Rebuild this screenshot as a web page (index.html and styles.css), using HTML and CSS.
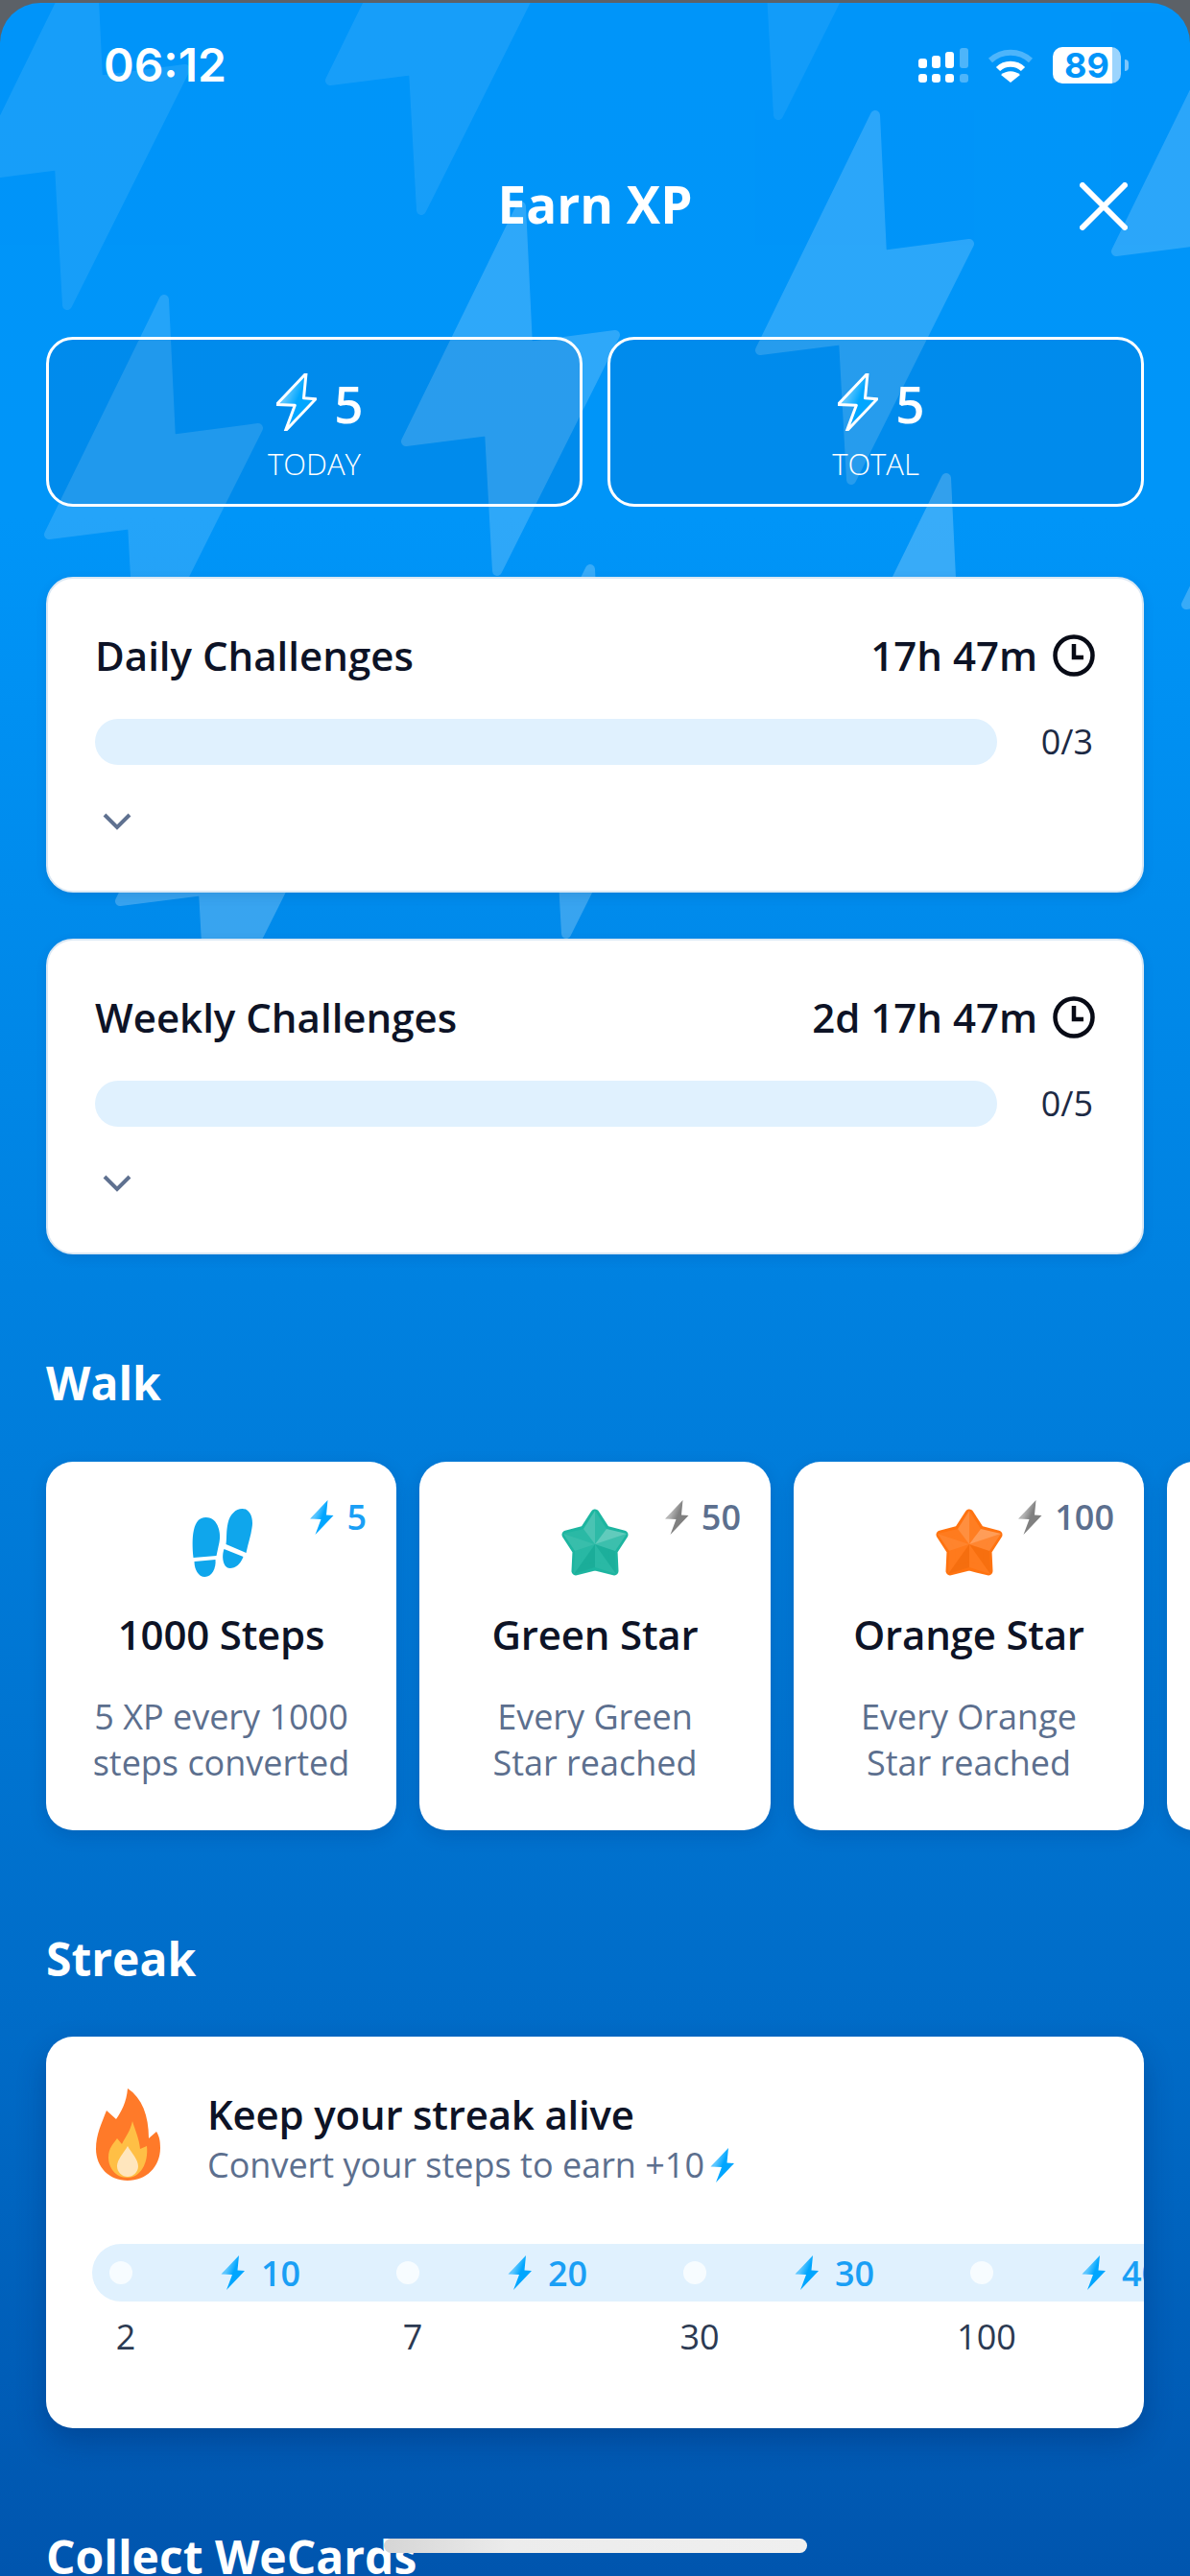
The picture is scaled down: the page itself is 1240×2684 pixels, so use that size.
FILE: index.html
```html
<!DOCTYPE html>
<html lang="en">
<head>
    <meta charset="UTF-8">
    <meta name="viewport" content="width=device-width, initial-scale=1.0">
    <title>Earn XP</title>
    <link rel="stylesheet" href="styles.css">
</head>
<body>
    <svg class="defs" width="0" height="0">
        <defs>
            <linearGradient id="boltFill" x1="0" y1="0" x2="1" y2="0.6">
                <stop offset="0.35" stop-color="#5cc6ff"/>
                <stop offset="0.6" stop-color="#00a6ff"/>
            </linearGradient>
            <linearGradient id="boltGrey" x1="0" y1="0" x2="1" y2="0.6">
                <stop offset="0.35" stop-color="#b5b5b5"/>
                <stop offset="0.6" stop-color="#808080"/>
            </linearGradient>
            <symbol id="bgBolt" viewBox="-110 -395 250 410" overflow="visible">
                <path d="M25 -380 L32 -234 L123 -246 L0 0 L-8 -146 L-95 -135 Z" fill="#fff" stroke="#fff" stroke-width="10" stroke-linejoin="round"/>
            </symbol>
            <symbol id="miniBolt" viewBox="0 0 25 36">
                <path d="M18.5 0 L0 19.5 L11.5 20 L5.5 36 L24.5 16 L17 15.5 Z"/>
            </symbol>
            <symbol id="star" viewBox="0 0 72 72">
                <path d="M36 5 L47 22 L66 27 L55 44 L56 65 L36 60 L16 65 L17 44 L6 27 L25 22 Z" fill="currentColor" stroke="currentColor" stroke-width="9" stroke-linejoin="round"/>
                <path d="M36 37 L36 2 L48 21 Z" fill="#fff" opacity=".08"/>
                <path d="M36 37 L48 21 L69 26 Z" fill="#fff" opacity=".3"/>
                <path d="M36 37 L69 26 L57 44 Z" fill="#fff" opacity=".14"/>
                <path d="M36 37 L57 44 L58 68 Z" fill="#000" opacity=".03"/>
                <path d="M36 37 L58 68 L36 61 Z" fill="#fff" opacity=".06"/>
                <path d="M36 37 L36 61 L14 68 Z" fill="#000" opacity=".04"/>
                <path d="M36 37 L14 68 L15 44 Z" fill="#fff" opacity=".05"/>
                <path d="M36 37 L15 44 L3 26 Z" fill="#fff" opacity=".12"/>
                <path d="M36 37 L3 26 L24 21 Z" fill="#fff" opacity=".06"/>
                <path d="M36 37 L24 21 L36 2 Z" fill="#fff" opacity=".2"/>
            </symbol>
            <symbol id="clock" viewBox="0 0 44 44">
                <circle cx="22" cy="22" r="19.5" fill="none" stroke="#080b16" stroke-width="4.5"/>
                <path d="M22 10 V24 H32" fill="none" stroke="#080b16" stroke-width="4.5"/>
            </symbol>
            <symbol id="chevron" viewBox="0 0 30 18">
                <path d="M2 2 L15 15 L28 2" fill="none" stroke="#5f7190" stroke-width="4"/>
            </symbol>
        </defs>
    </svg>

    <div class="screen">
        <!-- lightning pattern behind everything -->
        <svg class="bg-bolts" width="1240" height="1100" viewBox="0 0 1240 1100">
            <use href="#bgBolt" x="-40" y="-77" width="250" height="410" opacity=".09"/>
            <use href="#bgBolt" x="329" y="-176" width="250" height="410" opacity=".09"/>
            <use href="#bgBolt" x="701" y="-275" width="250" height="410" opacity=".07"/>
            <use href="#bgBolt" x="777" y="105" width="250" height="410" opacity=".17"/>
            <use href="#bgBolt" x="1148" y="2" width="250" height="410" opacity=".17"/>
            <use href="#bgBolt" x="408" y="200" width="250" height="410" opacity=".18"/>
            <use href="#bgBolt" x="36" y="297" width="250" height="410" opacity=".14"/>
            <use href="#bgBolt" x="851" y="483" width="250" height="410" opacity=".22"/>
            <use href="#bgBolt" x="110" y="679" width="250" height="410" opacity=".22"/>
            <use href="#bgBolt" x="480" y="578" width="250" height="410" opacity=".22"/>
            <use href="#bgBolt" x="1221" y="370" width="250" height="410" opacity=".22"/>
        </svg>

        <div class="status-bar">
            <span class="clock-time">06:12</span>
            <div class="status-icons">
                <svg class="signal" width="52" height="37" viewBox="0 0 52 37">
                    <g fill="#fff">
                        <rect x="0" y="11" width="9" height="10" rx="3"/>
                        <rect x="14" y="8" width="9" height="13" rx="3"/>
                        <rect x="28" y="4" width="9" height="17" rx="3"/>
                        <rect x="0" y="27" width="9" height="9" rx="3"/>
                        <rect x="14" y="27" width="9" height="9" rx="3"/>
                        <rect x="28" y="27" width="9" height="9" rx="3"/>
                    </g>
                    <g fill="#fff" opacity=".3">
                        <rect x="43" y="0" width="9" height="21" rx="3"/>
                        <rect x="43" y="27" width="9" height="9" rx="3"/>
                    </g>
                </svg>
                <svg class="wifi" width="48" height="37" viewBox="0 0 48 37">
                    <path d="M3 13 C15 2 33 2 45 13" fill="none" stroke="#fff" stroke-opacity=".3" stroke-width="6"/>
                    <path d="M11 22 C18 15 30 15 37 22" fill="none" stroke="#fff" stroke-width="6"/>
                    <path d="M24 36 L14 28 C20 23 28 23 34 28 Z" fill="#fff"/>
                </svg>
                <div class="battery"><span>89</span></div>
            </div>
        </div>

        <header class="top-bar">
            <h1>Earn XP</h1>
            <svg class="close" width="50" height="50" viewBox="0 0 50 50">
                <path d="M3 3 L47 47 M47 3 L3 47" stroke="#fff" stroke-width="6" stroke-linecap="round"/>
            </svg>
        </header>

        <main class="content">
            <div class="stats">
                <div class="stat">
                    <div class="stat-value">
                        <svg class="stat-bolt" width="46" height="66"><use href="#miniBolt" width="42" height="60" x="2" y="3" fill="url(#boltFill)" stroke="#fff" stroke-width="1.8" stroke-linejoin="round"/></svg>
                        <span>5</span>
                    </div>
                    <div class="stat-label">TODAY</div>
                </div>
                <div class="stat">
                    <div class="stat-value">
                        <svg class="stat-bolt" width="46" height="66"><use href="#miniBolt" width="42" height="60" x="2" y="3" fill="url(#boltFill)" stroke="#fff" stroke-width="1.8" stroke-linejoin="round"/></svg>
                        <span>5</span>
                    </div>
                    <div class="stat-label">TOTAL</div>
                </div>
            </div>

            <section class="challenge">
                <div class="challenge-head">
                    <h3>Daily Challenges</h3>
                    <div class="timer">17h 47m <svg width="44" height="44"><use href="#clock"/></svg></div>
                </div>
                <div class="progress-row">
                    <div class="progress"></div>
                    <span>0/3</span>
                </div>
                <svg class="chevron" width="30" height="18"><use href="#chevron"/></svg>
            </section>

            <section class="challenge">
                <div class="challenge-head">
                    <h3>Weekly Challenges</h3>
                    <div class="timer">2d 17h 47m <svg width="44" height="44"><use href="#clock"/></svg></div>
                </div>
                <div class="progress-row">
                    <div class="progress"></div>
                    <span>0/5</span>
                </div>
                <svg class="chevron" width="30" height="18"><use href="#chevron"/></svg>
            </section>

            <h2 class="section-title">Walk</h2>
            <div class="walk-row">
                <div class="walk-card">
                    <div class="xp-badge xp-blue">
                        <svg width="25" height="36"><use href="#miniBolt" fill="url(#boltFill)"/></svg>5
                    </div>
                    <svg class="walk-icon" width="72" height="72" viewBox="-5.5 0 72 72">
                        <g fill="#0fa6ec">
                            <path d="M1 51 C-1 30 0 9 14 9 C28 9 30 28 28 35 C27 40 26 44 25 49 Z"/>
                            <path d="M2 55 L24 53 C25 62 20 71 13 71 C6 71 2 63 2 55 Z"/>
                            <path d="M35 37 C36 30 35 24 37 15 C39 6 45 0 52 0 C60 0 64 10 62 20 C61 28 58 36 56 46 Z"/>
                            <path d="M33 42 L53 50 C50 58 45 62 39 62 C32 62 30 50 33 42 Z"/>
                        </g>
                    </svg>
                    <h4>1000 Steps</h4>
                    <p>5 XP every 1000 steps converted</p>
                </div>
                <div class="walk-card">
                    <div class="xp-badge xp-grey">
                        <svg width="25" height="36"><use href="#miniBolt" fill="url(#boltGrey)"/></svg>50
                    </div>
                    <svg class="walk-icon star-green" width="72" height="72"><use href="#star"/></svg>
                    <h4>Green Star</h4>
                    <p>Every Green<br>Star reached</p>
                </div>
                <div class="walk-card">
                    <div class="xp-badge xp-grey">
                        <svg width="25" height="36"><use href="#miniBolt" fill="url(#boltGrey)"/></svg>100
                    </div>
                    <svg class="walk-icon star-orange" width="72" height="72"><use href="#star"/></svg>
                    <h4>Orange Star</h4>
                    <p>Every Orange<br>Star reached</p>
                </div>
                <div class="walk-card"></div>
            </div>

            <h2 class="section-title section-title-streak">Streak</h2>
            <section class="streak">
                <div class="streak-head">
                    <svg class="flame" width="67" height="96" viewBox="0 0 67 96">
                        <path d="M33 0 C48 10 55 28 55 52 L63 45 C66 50 67 54 67 62 C67 82 52 96 33 96 C14 96 0 82 0 63 C0 48 6 36 11 23 L21 32 C26 25 32 14 33 0 Z" fill="#ff7a29"/>
                        <path d="M38 34 C41 44 45 52 46 63 L53 60 C55 78 46 93 33 93 C20 93 13 82 13 72 C13 62 18 58 22 52 L27 58 C31 50 36 44 38 34 Z" fill="#ffbf45"/>
                        <path d="M33 60 C37 67 44 74 44 81 C44 87 39 92 33 92 C27 92 22 87 22 81 C22 74 29 67 33 60 Z" fill="#ffe6bd"/>
                    </svg>
                    <div class="streak-text">
                        <h3>Keep your streak alive</h3>
                        <p>Convert your steps to earn +10<svg width="26" height="36"><use href="#miniBolt" width="26" height="36" fill="url(#boltFill)"/></svg></p>
                    </div>
                </div>
                <div class="track">
                    <div class="track-item"><i></i><svg width="26" height="36"><use href="#miniBolt" width="26" height="36" fill="url(#boltFill)"/></svg><b>10</b></div>
                    <div class="track-item"><i></i><svg width="26" height="36"><use href="#miniBolt" width="26" height="36" fill="url(#boltFill)"/></svg><b>20</b></div>
                    <div class="track-item"><i></i><svg width="26" height="36"><use href="#miniBolt" width="26" height="36" fill="url(#boltFill)"/></svg><b>30</b></div>
                    <div class="track-item"><i></i><svg width="26" height="36"><use href="#miniBolt" width="26" height="36" fill="url(#boltFill)"/></svg><b>40</b></div>
                </div>
                <div class="track-labels">
                    <span>2</span>
                    <span>7</span>
                    <span>30</span>
                    <span>100</span>
                </div>
            </section>

            <h2 class="section-title">Collect WeCards</h2>
        </main>

        <div class="home-indicator"></div>
    </div>
</body>
</html>
```

FILE: styles.css
```css
html, body {
    margin: 0;
    padding: 0;
    height: 2684px;
    overflow: hidden;
}

body {
    background-color: #5c6167;
    font-family: "Open Sans", "Noto Sans", sans-serif;
    color: #0d1326;
}

h1, h2, h3, h4, p {
    margin: 0;
}

.defs {
    position: absolute;
}

.screen {
    position: relative;
    margin-top: 3px;
    height: 2681px;
    overflow: hidden;
    border-radius: 42px 42px 0 0;
    background: linear-gradient(180deg, #0095f9 0%, #0095f8 20%, #007ddb 56%, #006cc8 78%, #0055ae 100%);
}

.bg-bolts {
    position: absolute;
    top: -3px;
    left: 0;
}

/* status bar */
.status-bar {
    position: relative;
    display: flex;
    justify-content: space-between;
    height: 48px;
    padding: 41px 72px 0 108px;
    font-family: Inter, sans-serif;
    color: #fff;
}

.clock-time {
    font-size: 48px;
    font-weight: 600;
    line-height: 48px;
}

.status-icons {
    display: flex;
    align-items: center;
    gap: 20px;
    height: 48px;
}

.battery {
    position: relative;
    width: 71px;
    height: 38px;
    border-radius: 10px;
    background: linear-gradient(90deg, #fff 88%, #9bd4fd 88%);
    color: #0095f9;
    font-size: 36px;
    font-weight: 700;
    line-height: 38px;
    text-align: center;
}

.battery::after {
    content: "";
    position: absolute;
    right: -8px;
    top: 13px;
    width: 4px;
    height: 12px;
    border-radius: 0 6px 6px 0;
    background-color: #7cc6fc;
}

/* header */
.top-bar {
    position: relative;
    height: 80px;
    margin-top: 81px;
    display: flex;
    align-items: center;
    justify-content: center;
}

.top-bar h1 {
    font-size: 53px;
    font-weight: 700;
    line-height: 80px;
    color: #fff;
}

.close {
    position: absolute;
    right: 65px;
    top: 17px;
}

.content {
    position: relative;
    padding: 0 48px;
}

/* today / total */
.stats {
    display: flex;
    gap: 26px;
    margin-top: 98px;
}

.stat {
    flex: 1;
    height: 177px;
    box-sizing: border-box;
    border: 3px solid #fff;
    border-radius: 28px;
    background-color: rgba(0, 60, 140, 0.1);
    color: #fff;
    text-align: center;
}

.stat-value {
    display: flex;
    align-items: center;
    justify-content: center;
    gap: 16px;
    height: 66px;
    margin-top: 32px;
    padding-left: 10px;
    font-size: 53px;
    font-weight: 600;
}

.stat-value span {
    padding-top: 3px;
}

.stat-label {
    margin-top: 10px;
    font-size: 31px;
    font-weight: 300;
    line-height: 42px;
}

/* challenge cards */
.challenge {
    height: 329px;
    box-sizing: border-box;
    margin-top: 73px;
    padding: 51px 49px 0;
    border: 2px solid #dbe8f4;
    border-radius: 28px;
    background-color: #fff;
    box-shadow: 0 4px 12px rgba(0, 40, 100, 0.12);
}

.challenge + .challenge {
    margin-top: 48px;
}

.challenge-head {
    display: flex;
    justify-content: space-between;
    align-items: center;
    height: 56px;
}

.challenge-head h3 {
    font-size: 42px;
    font-weight: 600;
}

.timer {
    display: flex;
    align-items: center;
    gap: 16px;
    font-size: 42px;
    font-weight: 600;
}

.timer svg {
    margin-top: 2px;
}

.progress-row {
    display: flex;
    align-items: center;
    justify-content: space-between;
    margin-top: 38px;
    padding-right: 2px;
    font-size: 36px;
    color: #1d2a44;
}

.progress {
    width: 940px;
    height: 48px;
    border-radius: 24px;
    background-color: #e0f1fe;
}

.chevron {
    display: block;
    margin: 50px 0 0 8px;
}

/* section titles */
.section-title {
    margin-top: 104px;
    font-size: 48px;
    font-weight: 700;
    line-height: 60px;
    color: #fff;
}

/* walk cards */
.walk-row {
    display: flex;
    gap: 24px;
    margin-top: 52px;
    width: 1600px;
}

.walk-card {
    position: relative;
    flex: none;
    width: 365px;
    height: 384px;
    border-radius: 28px;
    background-color: #fff;
    box-shadow: 0 6px 18px rgba(0, 30, 90, 0.16);
    text-align: center;
}

.walk-card:nth-child(2) {
    width: 366px;
}

.walk-icon {
    display: block;
    margin: 0 auto;
    padding-top: 49px;
}

.star-green {
    color: #1db5a0;
}

.star-orange {
    color: #ff7310;
}

.walk-card h4 {
    margin-top: 31px;
    font-size: 42px;
    font-weight: 600;
    line-height: 56px;
    letter-spacing: -0.2px;
}

.walk-card p {
    margin-top: 34px;
    padding: 0 24px;
    font-size: 36px;
    line-height: 48px;
    color: #5c6f8e;
}

.xp-badge {
    position: absolute;
    top: 40px;
    right: 31px;
    display: flex;
    align-items: center;
    gap: 13px;
    font-size: 36px;
    font-weight: 600;
    line-height: 36px;
}

.xp-blue {
    color: #1a9ff5;
}

.xp-grey {
    color: #5c6f8e;
}

/* streak */
.streak {
    height: 408px;
    box-sizing: border-box;
    margin-top: 51px;
    padding: 54px 0 0 48px;
    overflow: hidden;
    border-radius: 28px;
    background-color: #fff;
    box-shadow: 0 14px 30px rgba(0, 30, 90, 0.3);
}

.streak-head {
    display: flex;
    gap: 49px;
    height: 162px;
    margin-left: 4px;
}

.streak-text h3 {
    margin-top: 2px;
    font-size: 42px;
    font-weight: 600;
    line-height: 50px;
    letter-spacing: -0.2px;
}

.streak-text p {
    display: flex;
    align-items: center;
    gap: 6px;
    margin-top: 4px;
    font-size: 36px;
    line-height: 48px;
    color: #5c6f8e;
}

.track {
    display: flex;
    height: 60px;
    padding-left: 18px;
    border-radius: 30px 0 0 30px;
    background-color: #e0f1fe;
    overflow: hidden;
}

.track-item {
    display: flex;
    flex: none;
    align-items: center;
    width: 299px;
}

.track-item i {
    width: 24px;
    height: 24px;
    margin-right: 92px;
    border-radius: 50%;
    background-color: #f7fcff;
}

.track-item b {
    margin-left: 16px;
    font-size: 36px;
    font-weight: 600;
    color: #1a9ff5;
}

.track-labels {
    display: flex;
    margin-top: 13px;
    font-size: 36px;
    line-height: 48px;
    color: #2c3a52;
}

.track-labels span {
    flex: none;
    width: 70px;
    margin-right: 229px;
    text-align: center;
}

/* home indicator */
.home-indicator {
    position: absolute;
    left: 400px;
    top: 2642px;
    width: 441px;
    height: 15px;
    border-radius: 8px;
    background: linear-gradient(90deg, #d5d5d5, #ececec 30%, #efefef);
}
```
